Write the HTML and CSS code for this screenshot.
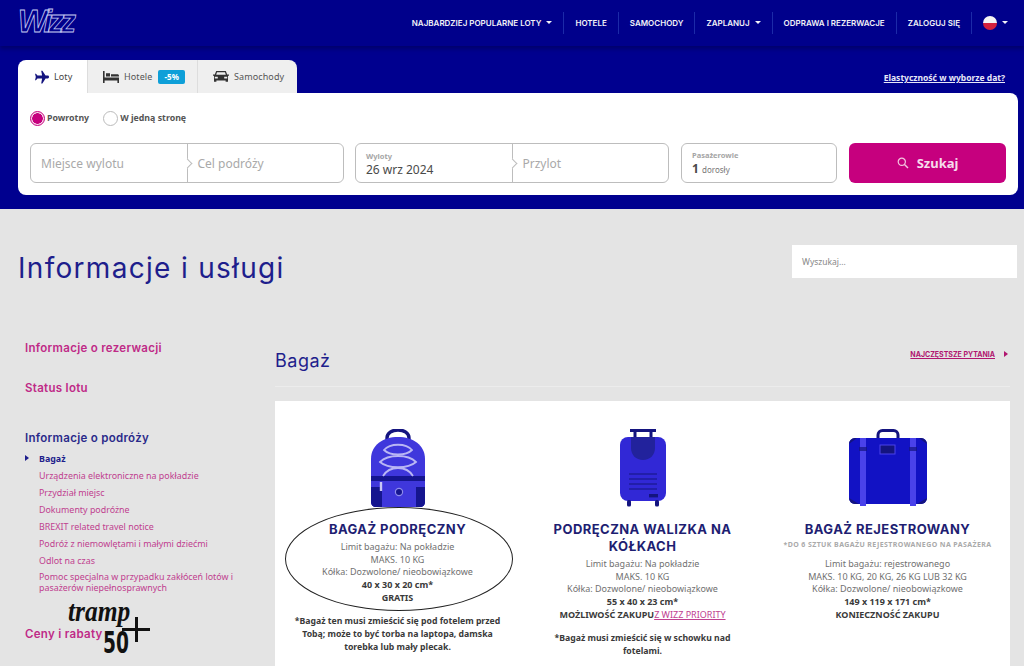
FILE: index.html
```html
<!DOCTYPE html>
<html lang="pl">
<head>
    <meta charset="UTF-8">
    <title>Informacje i usługi</title>
    <link rel="stylesheet" href="styles.css">
</head>
<body>
    <div class="top-bar">
        <a class="logo">Wizz</a>
        <div class="top-nav">
            <a class="has-caret">Najbardziej popularne loty</a>
            <a>Hotele</a>
            <a>Samochody</a>
            <a class="has-caret">Zaplanuj</a>
            <a>Odprawa i rezerwacje</a>
            <a>Zaloguj się</a>
            <a class="has-caret lang"><span class="flag"></span></a>
        </div>
    </div>

    <div class="hero">
        <div class="tab-row">
            <div class="tabs">
                <div class="tab tab-loty active">
                    <svg width="15" height="14" viewBox="0 0 20 18"><path d="M11.2 0.5h-1.6l1.2 6.6H4.6L2.6 4.8H1.4l1 4.2-1 4.2h1.2l2-2.3h6.2L9.6 17.5h1.600l4.2-6.6h3c1 0 1.600-.8 1.600-1.900s-.6-1.900-1.600-1.900h-3z" fill="#14147f"/></svg>
                    Loty
                </div>
                <div class="tab tab-hotele">
                    <svg width="16" height="12" viewBox="0 0 16 12"><path d="M0 0h1.600v6.500H16V12h-1.600v-2.500H1.600V12H0z M3 2.200h4v3.300H3z M8 3.200h6.400c.9 0 1.600.7 1.600 1.600v.7H8z" fill="#333"/></svg>
                    Hotele
                    <span class="badge">-5%</span>
                </div>
                <div class="tab tab-auta">
                    <svg width="16" height="12" viewBox="0 0 16 12"><path d="M3.200 0h9.600l1.400 3.600H16v1.200h-1v6H12.600V9.600H3.400v1.200H1v-6H0V3.600h1.800zM4 1.300 3.200 3.800h9.600L12 1.300zM1.800 5.800v1.700h3V5.800zM11.200 5.800v1.700h3V5.800z" fill="#333"/></svg>
                    Samochody
                </div>
            </div>
            <a class="flex-dates">Elastyczność w wyborze dat?</a>
        </div>

        <div class="search-panel">
            <div class="radios">
                <div class="radio on"><span class="dot"></span>Powrotny</div>
                <div class="radio"><span class="dot"></span>W jedną stronę</div>
            </div>
            <div class="fields">
                <div class="field double">
                    <div class="part"><span class="placeholder">Miejsce wylotu</span></div>
                    <div class="part"><span class="placeholder">Cel podróży</span></div>
                </div>
                <div class="field double">
                    <div class="part">
                        <span class="small-label">Wyloty</span>
                        <span class="value">26 wrz 2024</span>
                    </div>
                    <div class="part"><span class="placeholder">Przylot</span></div>
                </div>
                <div class="field pax">
                    <div class="part">
                        <span class="small-label">Pasażerowie</span>
                        <span class="value"><b>1</b> <small>dorosły</small></span>
                    </div>
                </div>
                <button class="search-btn">
                    <svg width="12" height="12" viewBox="0 0 12 12"><circle cx="4.800" cy="4.800" r="3.600" fill="none" stroke="#f3c6e0" stroke-width="1.200"/><path d="M7.500 7.500 11 11" stroke="#f3c6e0" stroke-width="1.400"/></svg>
                    Szukaj
                </button>
            </div>
        </div>
    </div>

    <div class="page-head">
        <h1>Informacje i usługi</h1>
        <div class="site-search">Wyszukaj...</div>
    </div>

    <div class="content">
        <div class="side-menu">
            <a class="menu-head first">Informacje o rezerwacji</a>
            <a class="menu-head status">Status lotu</a>
            <a class="menu-head current">Informacje o podróży</a>
            <ul>
                <li class="active">Bagaż</li>
                <li>Urządzenia elektroniczne na pokładzie</li>
                <li>Przydział miejsc</li>
                <li>Dokumenty podróżne</li>
                <li>BREXIT related travel notice</li>
                <li>Podróż z niemowlętami i małymi dziećmi</li>
                <li>Odlot na czas</li>
                <li class="two-lines">Pomoc specjalna w przypadku zakłóceń lotów i pasażerów niepełnosprawnych</li>
            </ul>
            <a class="menu-head last">Ceny i rabaty</a>
            <div class="stamp">
                <span class="stamp-top">tramp</span>
                <span class="stamp-num">50</span>
                <span class="stamp-plus"></span>
            </div>
        </div>

        <div class="main">
            <div class="main-head">
                <h2>Bagaż</h2>
                <a class="faq">Najczęstsze pytania</a>
            </div>

            <div class="bag-card">
                <div class="bag-col first-col">
                    <svg class="bag-icon" width="56" height="78" viewBox="0 0 56 78">
                        <path d="M17 13V9C17 4 22 1 28 1s11 3 11 8v4" fill="none" stroke="#14147f" stroke-width="3.400"/>
                        <path d="M1 30C1 16 13 8 28 8s27 8 27 22v43c0 3-2 5-5 5H6c-3 0-5-2-5-5z" fill="#3f37dc"/>
                        <path d="M1 58h54v15c0 3-2 5-5 5H6c-3 0-5-2-5-5z" fill="#15158f"/>
                        <path d="M12 58h34v20H12z" fill="#3f37dc"/>
                        <path d="M1 47h54v5H1z" fill="#15158f"/>
                        <path d="M14 21C20 14 36 14 42 21 36 27 20 27 14 21zM10 33C18 25 38 25 46 33 38 40 18 40 10 33zM13 47C16 42 22 39 28 39S40 42 43 47" fill="none" stroke="#b9b6f4" stroke-width="1.800"/>
                        <circle cx="29" cy="63" r="3.600" fill="#15158f" stroke="#8f8cec" stroke-width="1.200"/>
                        <path d="M11 53v9" stroke="#c9c7f5" stroke-width="2.400"/>
                    </svg>
                    <h3>Bagaż podręczny</h3>
                    <p class="limits">Limit bagażu: Na pokładzie<br>MAKS. 10 KG<br>Kółka: Dozwolone/ nieobowiązkowe<br><b>40 x 30 x 20 cm*</b><br><b>GRATIS</b></p>
                    <p class="note">*Bagaż ten musi zmieścić się pod fotelem przed Tobą; może to być torba na laptopa, damska torebka lub mały plecak.</p>
                    <div class="marker-ring"></div>
                </div>

                <div class="bag-col">
                    <svg class="bag-icon" width="46" height="78" viewBox="0 0 46 78">
                        <path d="M10 1.500h26M15 2v8M31 2v8" stroke="#14147f" stroke-width="3" fill="none"/>
                        <rect x="0" y="8" width="46" height="64" rx="8" fill="#3128d6"/>
                        <path d="M11 8h24v11c0 7-5 12-12 12s-12-5-12-12z" fill="#22229c"/>
                        <path d="M9 45h28M9 50h28M9 55h28M9 60h28" stroke="#14147f" stroke-width="1.200"/>
                        <rect x="29" y="65" width="9" height="3.400" fill="#14147f"/>
                        <rect x="7" y="71" width="4" height="6.500" rx="1.500" fill="#14147f"/>
                        <rect x="35" y="71" width="4" height="6.500" rx="1.500" fill="#14147f"/>
                    </svg>
                    <h3>Podręczna walizka na kółkach</h3>
                    <p class="limits">Limit bagażu: Na pokładzie<br>MAKS. 10 KG<br>Kółka: Dozwolone/ nieobowiązkowe<br><b>55 x 40 x 23 cm*</b><br><b>MOŻLIWOŚĆ ZAKUPU</b><a class="priority">Z WIZZ PRIORITY</a></p>
                    <p class="note">*Bagaż musi zmieścić się w schowku nad fotelami.</p>
                </div>

                <div class="bag-col">
                    <svg class="bag-icon" width="78" height="78" viewBox="0 0 78 78">
                        <path d="M29 10V6c0-2.500 2-4.500 4.500-4.500h11C47 1.500 49 3.500 49 6v4" fill="none" stroke="#14147f" stroke-width="3"/>
                        <rect x="0" y="9" width="78" height="66" rx="6" fill="#1212c4"/>
                        <path d="M0 15c0-3 3-6 6-6h2zM78 15c0-3-3-6-6-6h-2zM0 69c0 3 3 6 6 6h4zM78 69c0 3-3 6-6 6h-4z" fill="#14147f"/>
                        <rect x="11" y="9" width="6" height="68" fill="#4a42ea"/>
                        <rect x="61" y="9" width="6" height="68" fill="#4a42ea"/>
                        <rect x="10" y="18" width="8" height="4" fill="#14147f" opacity=".7"/>
                        <rect x="60" y="18" width="8" height="4" fill="#14147f" opacity=".7"/>
                        <rect x="31" y="16" width="15" height="9" fill="#14147f" stroke="#4a42ea"/>
                    </svg>
                    <h3>Bagaż rejestrowany</h3>
                    <p class="sub-note">*Do 6 sztuk bagażu rejestrowanego na pasażera</p>
                    <p class="limits">Limit bagażu: rejestrowanego<br>MAKS. 10 KG, 20 KG, 26 KG LUB 32 KG<br>Kółka: Dozwolone/ nieobowiązkowe<br><b>149 x 119 x 171 cm*</b><br><b>KONIECZNOŚĆ ZAKUPU</b></p>
                </div>
            </div>
        </div>
    </div>
</body>
</html>
```

FILE: styles.css
```css
* {
    box-sizing: border-box;
}
html, body {
    height: 666px;
    overflow: hidden;
}
body {
    margin: 0;
    background-color: #e4e4e4;
    font-family: "Noto Sans", "Open Sans", sans-serif;
    color: #555;
}
a {
    text-decoration: none;
}

/* top bar */
.top-bar {
    display: flex;
    justify-content: space-between;
    align-items: center;
    height: 46px;
    padding: 0 5px 0 18px;
    background-color: #00008b;
    box-shadow: 0 3px 4px #00006c;
    position: relative;
}
.logo {
    font-family: "Liberation Sans", sans-serif;
    font-style: italic;
    font-weight: bold;
    font-size: 31px;
    line-height: 34px;
    letter-spacing: -3.500px;
    color: transparent;
    -webkit-text-stroke: 0.8px #c5c9f2;
    margin-top: -3px;
}
.top-nav {
    display: flex;
    align-items: center;
    margin-top: -1px;
}
.top-nav a {
    display: flex;
    align-items: center;
    height: 22px;
    padding: 0 11px;
    border-left: 1px solid #1c2aa8;
    color: #f2f2f8;
    font-family: "Inter", sans-serif;
    font-size: 8px;
    font-weight: 600;
    text-transform: uppercase;
}
.top-nav a:first-child {
    border-left: none;
}
.has-caret::after {
    content: "";
    margin-left: 5px;
    border: 3px solid transparent;
    border-top-color: #f2f2f8;
    border-bottom: none;
}
.flag {
    width: 14px;
    height: 14px;
    border-radius: 50%;
    background: linear-gradient(#f4f4f4 50%, #d4213d 50%);
}

/* search box */
.hero {
    height: 163px;
    padding: 14px 6px 0 18px;
    background-color: #00008f;
}
.tab-row {
    display: flex;
    justify-content: space-between;
    align-items: flex-end;
    height: 33px;
}
.tabs {
    display: flex;
    height: 33px;
    border-radius: 8px 8px 0 0;
    overflow: hidden;
}
.tab {
    display: flex;
    align-items: center;
    gap: 5px;
    background-color: #efefef;
    border-left: 1px solid #ddd;
    font-size: 9px;
    letter-spacing: 0.1px;
    color: #555;
}
.tab svg {
    flex-shrink: 0;
}
.tab-loty {
    width: 69px;
    padding-left: 16px;
    border-left: none;
    background-color: white;
    color: #444;
}
.tab-hotele {
    width: 110px;
    padding-left: 15px;
}
.tab-auta {
    width: 100px;
    padding-left: 15px;
}
.badge {
    margin-left: 1px;
    padding: 2px 6px;
    border-radius: 2px;
    background-color: #0e9fd8;
    color: white;
    font-size: 8px;
    font-weight: 700;
    line-height: 10px;
}
.flex-dates {
    margin: 0 13px 10px 0;
    color: #e8e8f8;
    font-size: 8.500px;
    font-weight: 700;
    text-decoration: underline;
}
.search-panel {
    height: 102px;
    padding: 15px 12px 0 12px;
    background-color: white;
    border-radius: 0 8px 8px 8px;
}
.radios {
    display: flex;
    gap: 14px;
    height: 20px;
    align-items: center;
}
.radio {
    display: flex;
    align-items: center;
    gap: 2px;
    font-size: 8.800px;
    font-weight: 700;
    color: #555;
}
.dot {
    width: 15px;
    height: 15px;
    border-radius: 50%;
    border: 1px solid #bbb;
    background-color: white;
}
.radio.on .dot {
    border: 1.500px solid #c6007e;
    background: radial-gradient(circle, #c6007e 5px, #f6d8ea 5.500px);
}
.fields {
    display: flex;
    gap: 11px;
    margin-top: 15px;
}
.field {
    display: flex;
    height: 40px;
    border: 1px solid #bdbdbd;
    border-radius: 6px;
}
.double {
    width: 314px;
}
.pax {
    width: 156px;
    margin-left: 1px;
}
.part {
    position: relative;
    display: flex;
    flex-direction: column;
    justify-content: center;
    flex: 1;
    padding-left: 10px;
}
.part + .part {
    border-left: 1px solid #bdbdbd;
}
/* little chevron sitting on the divider */
.part + .part::before {
    content: "";
    position: absolute;
    left: -4px;
    top: 16px;
    width: 6px;
    height: 6px;
    background-color: white;
    border-top: 1px solid #bdbdbd;
    border-right: 1px solid #bdbdbd;
    transform: rotate(45deg);
}
.placeholder {
    color: #a9a9a9;
    font-size: 12px;
}
.small-label {
    margin-top: 2px;
    color: #a5a5a5;
    font-size: 7.500px;
    font-weight: 700;
    line-height: 10px;
}
.value {
    color: #4a4a4a;
    font-size: 12px;
    line-height: 17px;
}
.value small {
    font-size: 8px;
    color: #777;
}
.search-btn {
    display: flex;
    justify-content: center;
    align-items: center;
    gap: 8px;
    width: 157px;
    height: 40px;
    margin-left: 1px;
    border: none;
    border-radius: 6px;
    background-color: #c6007e;
    color: #f6dcec;
    font-family: "Noto Sans", sans-serif;
    font-size: 13px;
    font-weight: 700;
}

/* page heading */
.page-head {
    display: flex;
    justify-content: space-between;
    align-items: flex-start;
    height: 110px;
    padding: 36px 7px 0 18px;
}
.page-head h1 {
    margin: 0;
    padding-top: 4px;
    color: #1e1e8c;
    font-family: "Inter", sans-serif;
    font-size: 28px;
    font-weight: 400;
    letter-spacing: 1.300px;
    line-height: 38px;
}
.site-search {
    width: 225px;
    height: 33px;
    padding: 9px 10px;
    background-color: white;
    color: #888;
    font-size: 8.500px;
    line-height: 15px;
}

.content {
    display: flex;
    padding: 0 14px 0 25px;
}

/* left menu */
.side-menu {
    position: relative;
    flex-shrink: 0;
    width: 250px;
    padding-top: 21px;
}
.menu-head {
    display: block;
    width: fit-content;
    color: #bf2a87;
    font-family: "Inter", sans-serif;
    font-size: 11.500px;
    font-weight: 600;
    letter-spacing: 0.3px;
    line-height: 16px;
}
.status {
    margin-top: 24px;
}
.current {
    margin-top: 34px;
    color: #2a2a8a;
}
.side-menu ul {
    margin: 4px 0 0 0;
    padding: 0 0 0 14px;
    list-style: none;
    color: #c0408f;
    font-size: 8.900px;
    line-height: 17px;
}
.side-menu li.active {
    position: relative;
    color: #1e1e8c;
    font-weight: 700;
}
.side-menu li.active::before {
    content: "";
    position: absolute;
    left: -14px;
    top: 5px;
    border: 3.500px solid transparent;
    border-left: 4px solid #1e1e8c;
    border-right: none;
}
.two-lines {
    line-height: 11px;
    margin-top: 2px;
    width: 205px;
}
.last {
    margin-top: 33px;
}
.stamp {
    position: absolute;
    left: 43px;
    top: 284px;
    width: 84px;
    height: 52px;
    color: #111;
}
.stamp-top {
    position: absolute;
    left: 0;
    top: -5px;
    font-family: "Liberation Serif", serif;
    font-style: italic;
    font-weight: bold;
    font-size: 30px;
    line-height: 26px;
    transform: scaleX(0.85);
    transform-origin: left;
}
.stamp-num {
    position: absolute;
    left: 35px;
    top: 27px;
    font-family: "DejaVu Sans", sans-serif;
    font-size: 30px;
    font-weight: bold;
    line-height: 26px;
    transform: scaleX(0.62);
    transform-origin: left;
}
.stamp-plus {
    position: absolute;
    left: 54px;
    top: 14px;
    width: 28px;
    height: 25px;
    background:
        linear-gradient(#111, #111) center / 28px 3px no-repeat,
        linear-gradient(#111, #111) center / 3px 25px no-repeat;
}

/* main column */
.main {
    flex: 1;
}
.main-head {
    display: flex;
    justify-content: space-between;
    align-items: center;
    height: 68px;
    padding-top: 4px;
    border-bottom: 1px solid #ececec;
}
.main-head h2 {
    margin: 12px 0 0 0;
    color: #1e1e8c;
    font-family: "Inter", sans-serif;
    font-size: 18px;
    font-weight: 400;
    letter-spacing: 0.5px;
}
.faq {
    position: relative;
    margin-right: 15px;
    color: #b0156f;
    font-family: "Inter", sans-serif;
    font-size: 7px;
    font-weight: 700;
    text-decoration: underline;
    text-transform: uppercase;
}
.faq::after {
    content: "";
    position: absolute;
    right: -13px;
    top: 1px;
    border: 3.500px solid transparent;
    border-left: 4px solid #b0156f;
    border-right: none;
}
.bag-card {
    display: grid;
    grid-template-columns: repeat(3, 245px);
    margin-top: 14px;
    height: 265px;
    padding-top: 28px;
    background-color: white;
}
.bag-col {
    position: relative;
    display: flex;
    flex-direction: column;
    align-items: center;
    padding: 0 16px;
    text-align: center;
}
.bag-icon {
    flex-shrink: 0;
    margin-bottom: 14px;
}
.bag-col h3 {
    margin: 0;
    color: #1e1e72;
    font-family: "Inter", sans-serif;
    font-size: 13px;
    font-weight: 700;
    letter-spacing: 0.45px;
    line-height: 17px;
    text-transform: uppercase;
}
.limits {
    margin: 3px 0 0 0;
    font-size: 9px;
    line-height: 12.700px;
    color: #707070;
    white-space: nowrap;
}
.limits b {
    color: #3a3a3a;
}
.priority {
    color: #c0408f;
    text-decoration: underline;
}
.note {
    margin: 10px 0 0 0;
    color: #3a3a3a;
    font-size: 8.700px;
    font-weight: 700;
    line-height: 13px;
}
.sub-note {
    margin: 1px 0 0 0;
    color: #aaa;
    font-size: 7px;
    font-weight: 700;
    letter-spacing: 0.4px;
    line-height: 11px;
    text-transform: uppercase;
    white-space: nowrap;
}
.sub-note + .limits {
    margin-top: 8px;
}
.marker-ring {
    position: absolute;
    left: 10px;
    top: 78px;
    width: 228px;
    height: 104px;
    border: 1.500px solid #222;
    border-radius: 50%;
}
```
